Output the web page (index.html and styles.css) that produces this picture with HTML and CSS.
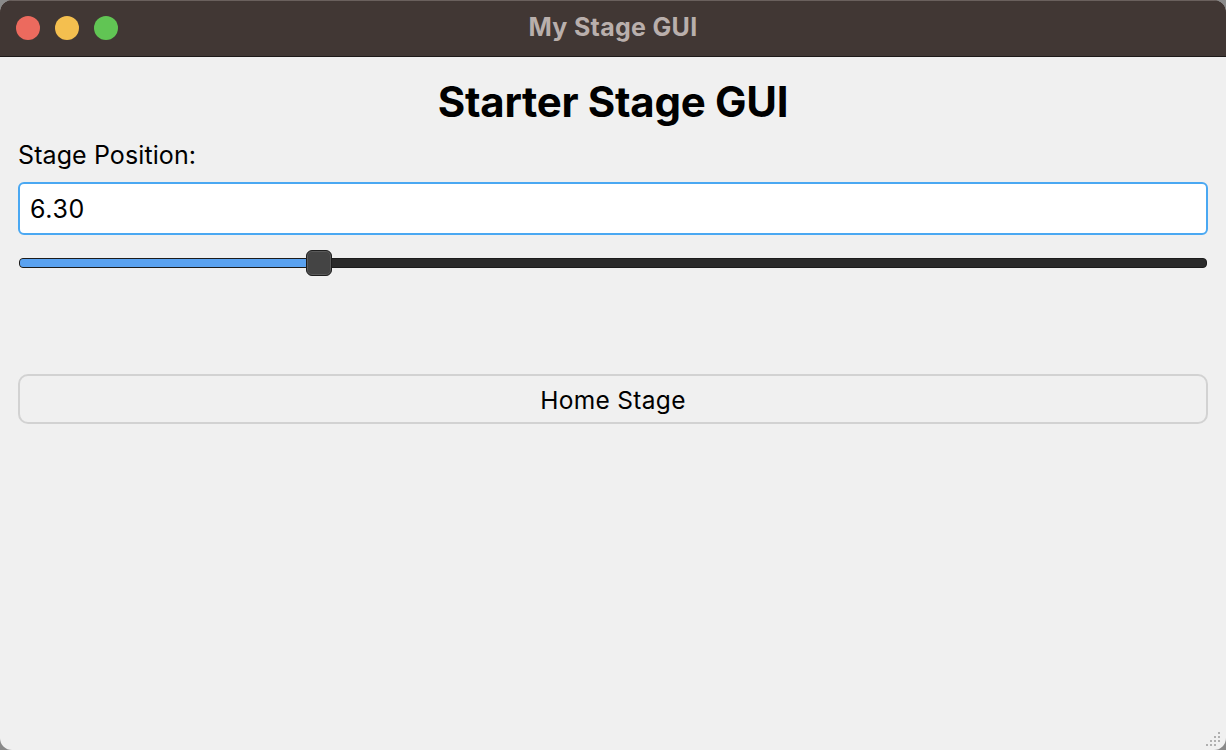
FILE: index.html
```html
<!DOCTYPE html>
<html>
<head>
<meta charset="utf-8">
<link rel="stylesheet" href="styles.css">
</head>
<body>
<div class="window">
  <div class="titlebar">
    <div class="lights">
      <span class="light red"></span>
      <span class="light yellow"></span>
      <span class="light green"></span>
    </div>
    <div class="title">My Stage GUI</div>
  </div>
  <div class="content">
    <h1 class="heading">Starter Stage GUI</h1>
    <div class="label">Stage Position:</div>
    <div class="input">6.30</div>
    <div class="slider">
      <div class="track">
        <div class="fill" style="width: 289px"></div>
      </div>
      <div class="handle" style="left: 288px"></div>
    </div>
    <div class="button">Home Stage</div>
  </div>
  <svg class="grip" width="14" height="14" viewBox="0 0 14 14">
    <g fill="#b0b0b0">
      <rect x="12" y="0" width="2" height="2"/>
      <rect x="8" y="4" width="2" height="2"/>
      <rect x="12" y="4" width="2" height="2"/>
      <rect x="4" y="8" width="2" height="2"/>
      <rect x="8" y="8" width="2" height="2"/>
      <rect x="12" y="8" width="2" height="2"/>
      <rect x="0" y="12" width="2" height="2"/>
      <rect x="4" y="12" width="2" height="2"/>
      <rect x="8" y="12" width="2" height="2"/>
    </g>
  </svg>
</div>
</body>
</html>
```
FILE: styles.css
```css
html, body {
  margin: 0;
  padding: 0;
  width: 1226px;
  height: 750px;
  background: #8a8a8a;
  overflow: hidden;
}
.window {
  position: relative;
  width: 1226px;
  height: 750px;
  background: #f0f0f0;
  border-radius: 12px;
  overflow: hidden;
  font-family: Inter, "Liberation Sans", sans-serif;
  color: #000;
  display: flex;
  flex-direction: column;
}
.titlebar {
  position: relative;
  height: 56px;
  background: #413734;
  border-bottom: 1px solid #1e1a19;
  box-shadow: inset 0 1px 0 #6a605d;
  display: flex;
  align-items: center;
  justify-content: center;
  flex-shrink: 0;
}
.lights {
  position: absolute;
  left: 16px;
  top: 16px;
  display: flex;
  gap: 15px;
}
.light {
  width: 24px;
  height: 24px;
  border-radius: 50%;
  display: block;
}
.red { background: #ec6a5e; }
.yellow { background: #f4bf4f; }
.green { background: #61c554; }
.title {
  color: #b9afac;
  font-size: 25px;
  font-weight: 700;
  letter-spacing: 0.3px;
  margin-top: -2px;
}
.content {
  padding: 0 18px;
  display: flex;
  flex-direction: column;
}
.heading {
  margin: 21px 0 0 0;
  text-align: center;
  font-size: 42px;
  font-weight: 700;
  line-height: 48px;
  letter-spacing: -0.3px;
}
.label {
  margin-top: 15px;
  font-size: 25px;
  line-height: 28px;
  letter-spacing: 0.1px;
}
.input {
  margin-top: 13px;
  height: 49px;
  background: #fff;
  border: 2px solid #4aa8f2;
  border-radius: 6px;
  font-size: 25px;
  line-height: 50px;
  letter-spacing: 0.6px;
  padding-left: 10px;
}
.slider {
  position: relative;
  margin-top: 15px;
  height: 26px;
  display: flex;
  align-items: center;
}
.track {
  flex: 1;
  height: 8px;
  margin: 0 1px;
  background: #2b2b2b;
  border: 1px solid #1c1c1c;
  border-radius: 4px;
  overflow: hidden;
}
.fill {
  height: 100%;
  background: #5aa2f0;
}
.handle {
  position: absolute;
  top: 0;
  width: 24px;
  height: 24px;
  background: #444444;
  border: 1px solid #1e1e1e;
  box-shadow: inset 0 0 0 1px #5a5a5a;
  border-radius: 6px;
}
.button {
  margin-top: 98px;
  height: 46px;
  border: 2px solid #d2d2d2;
  border-radius: 10px;
  text-align: center;
  font-size: 24.5px;
  line-height: 48px;
  letter-spacing: 0.3px;
}
.grip {
  position: absolute;
  right: 6px;
  bottom: 4px;
}
```
